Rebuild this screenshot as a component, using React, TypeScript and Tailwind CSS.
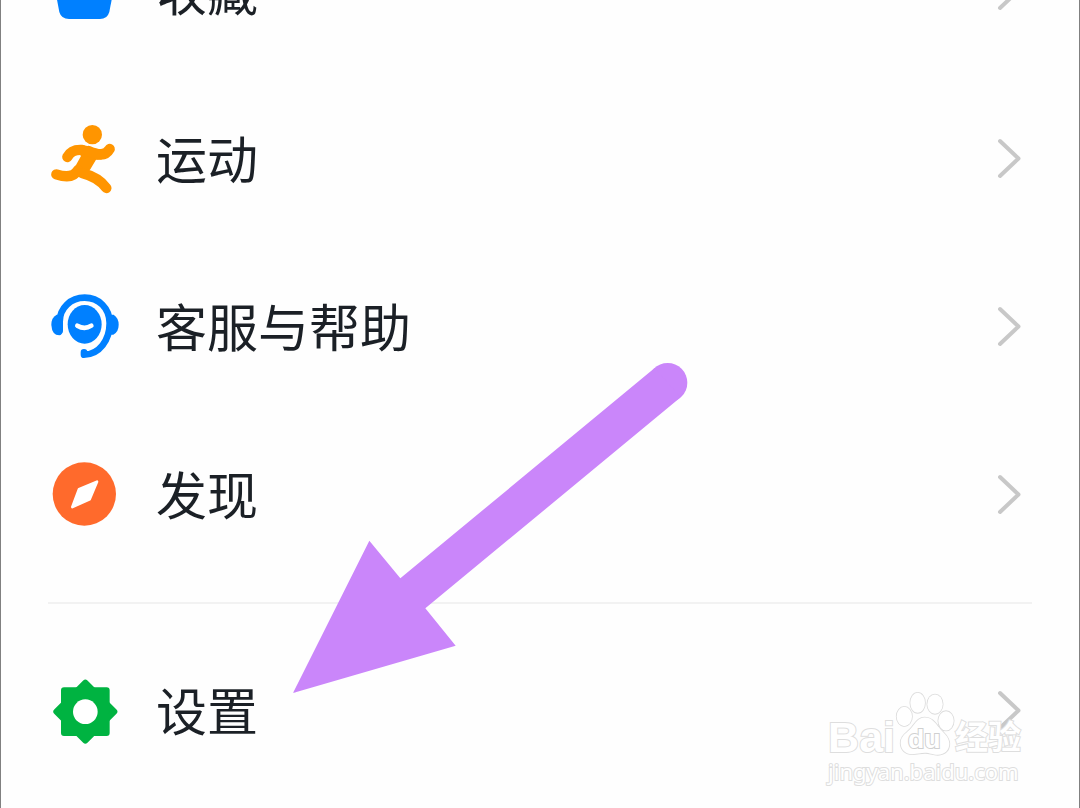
import type { ReactNode } from "react";

type Item = { label: string; icon: ReactNode };

function Icon({ viewBox, children }: { viewBox: string; children: ReactNode }) {
  return (
    <svg viewBox={viewBox} className="size-18 shrink-0" aria-hidden="true">
      {children}
    </svg>
  );
}

const favorites = (
  <Icon viewBox="144 -135 216 216">
    <path
      d="M156 -80 Q153 -110 183 -110 H323 Q353 -110 350 -80 L328 36 Q322 57 300 57 H207 Q184 57 178 36 Z"
      fill="#0080ff"
    />
  </Icon>
);

const sports = (
  <Icon viewBox="54 39 216 216">
    <circle cx="187" cy="74" r="29" fill="#ff9500" />
    <path
      d="M128 110 Q148 101 172 108 Q200 120 218 116 L216 148 Q205 150 198 149 L181 178 L160 202 L126 192 L138 165 L153 138 Z"
      fill="#ff9500"
    />
    <g fill="none" stroke="#ff9500" strokeWidth="31" strokeLinecap="round">
      <path d="M112 141 Q124 118 156 120" />
      <path d="M175 123 Q223 146 239 117" />
      <path d="M79 193 Q128 209 144 180" />
      <path d="M158 190 Q205 202 229 234" />
    </g>
  </Icon>
);

const support = (
  <Icon viewBox="54 33 216 216">
    <g fill="#0080ff">
      <ellipse cx="164" cy="133" rx="51" ry="58" />
      <path d="M80 104 Q64 112 64 135 Q66 166 88 166 Q97 164 97 152 V104 Z" />
      <path d="M232 104 H251 Q266 114 266 134 Q266 155 250 164 H232 Z" />
    </g>
    <path
      d="M89 152 V125 C89 84 122 53 164 53 C206 53 239 84 239 130 C239 180 208 224 162 224 V217"
      fill="none"
      stroke="#0080ff"
      strokeWidth="20"
      strokeLinecap="round"
      strokeLinejoin="round"
    />
    <path d="M142 137 Q164 150 184 137" fill="none" stroke="#fff" strokeWidth="14" strokeLinecap="round" />
  </Icon>
);

const discover = (
  <Icon viewBox="54 27 216 216">
    <circle cx="163" cy="132" r="95" fill="#ff6a2c" />
    <path
      d="M201 95 L179 148 L127 171 L147 118 Z"
      fill="#fff"
      stroke="#fff"
      strokeWidth="8"
      strokeLinejoin="round"
    />
  </Icon>
);

const settings = (
  <Icon viewBox="54 15 216 216">
    <g fill="#00b341" stroke="#00b341" strokeWidth="18" strokeLinejoin="round">
      <path d="M102 61 H230 V189 H102 Z" />
      <path d="M166 38 L253 125 L166 212 L79 125 Z" />
    </g>
    <circle cx="166" cy="125" r="37" fill="#fff" />
  </Icon>
);

const services: Item[] = [
  { label: "收藏", icon: favorites },
  { label: "运动", icon: sports },
  { label: "客服与帮助", icon: support },
  { label: "发现", icon: discover },
];

function Row({ label, icon }: Item) {
  return (
    <li>
      <a href="#" className="flex h-42 items-center gap-9">
        {icon}
        <span className="flex-1 pb-1 text-[51px] leading-none text-[#1b2026]">{label}</span>
        <svg viewBox="0 0 36 48" className="h-12 w-9 shrink-0" aria-hidden="true">
          <path
            d="M4 6 L22.5 23.5 L4 41"
            fill="none"
            stroke="#c8c8c8"
            strokeWidth="4"
            strokeLinecap="round"
            strokeLinejoin="round"
          />
        </svg>
      </a>
    </li>
  );
}

function Arrow() {
  return (
    <svg
      viewBox="39 36 1185 993"
      className="pointer-events-none absolute top-[362px] left-[292px] w-[395px]"
      aria-hidden="true"
    >
      <g fill="#ca86fa">
        <circle cx="1163" cy="98" r="59" />
        <path d="M39 1029 L268 572 L361 685 L1124 54 L1202 142 L436 775 L527 887 Z" />
      </g>
    </svg>
  );
}

function Watermark() {
  return (
    <div className="pointer-events-none absolute top-[690px] right-[58px] flex flex-col text-white [paint-order:stroke] [-webkit-text-stroke:2px_#dedede]">
      <div className="flex items-end">
        <span className="-mb-1 font-['Liberation_Sans',sans-serif] text-[43px] leading-[48px] font-bold">
          Bai
        </span>
        <svg viewBox="248 60 180 200" className="h-[67px] w-[60px]">
          <g fill="#fff" stroke="#dcdcdc" strokeWidth="5">
            <ellipse cx="276" cy="139" rx="23" ry="29" />
            <ellipse cx="316" cy="98" rx="22" ry="30" />
            <ellipse cx="368" cy="102" rx="23" ry="29" />
            <ellipse cx="401" cy="152" rx="23" ry="29" />
            <path d="M337 142 C318 142 310 158 298 172 C284 188 264 197 265 220 C266 240 280 252 300 252 C316 252 324 248 338 248 C352 248 360 254 376 254 C398 252 411 240 411 220 C410 198 392 188 380 172 C368 157 358 142 337 142 Z" />
          </g>
          <text
            x="287"
            y="234"
            fontSize="80"
            className="fill-white stroke-[#d0d0d0] stroke-[6px] font-['Liberation_Sans',sans-serif] font-bold [-webkit-text-stroke:6px_#d0d0d0] [paint-order:stroke]"
          >
            du
          </text>
        </svg>
        <span className="mb-1 text-[33px] leading-[36px] font-bold">经验</span>
      </div>
      <span className="font-['Noto_Sans',sans-serif] text-[22px] leading-[28px]">jingyan.baidu.com</span>
    </div>
  );
}

export default function App() {
  return (
    <main className="relative min-h-screen overflow-hidden border-x border-[#808080] bg-[#fefefe] px-[47px] font-['Noto_Sans_CJK_SC',sans-serif]">
      <nav className="-mt-[93px]">
        <ul>
          {services.map((item) => (
            <Row key={item.label} {...item} />
          ))}
        </ul>
        <hr className="my-[23px] border-t-2 border-[#f2f2f2]" />
        <ul>
          <Row label="设置" icon={settings} />
        </ul>
      </nav>
      <Arrow />
      <Watermark />
    </main>
  );
}
